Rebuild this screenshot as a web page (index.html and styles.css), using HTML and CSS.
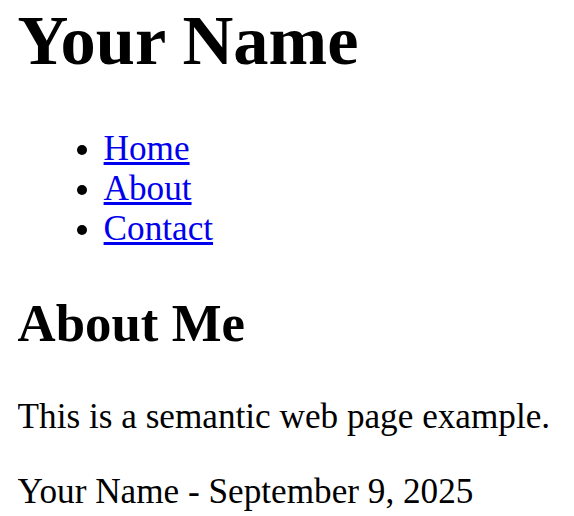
FILE: index.html
```html
<!DOCTYPE html>
<html lang="en">
<head>
<meta charset="utf-8">
<title>Your Name</title>
<link rel="stylesheet" href="styles.css">
</head>
<body class="page">
<header class="site-header">
  <h1 class="site-title">Your Name</h1>
  <nav class="site-nav">
    <ul class="nav-list">
      <li class="nav-item"><a class="nav-link" href="#home">Home</a></li>
      <li class="nav-item"><a class="nav-link" href="#about">About</a></li>
      <li class="nav-item"><a class="nav-link" href="#contact">Contact</a></li>
    </ul>
  </nav>
</header>
<main class="content">
  <section class="about">
    <h2 class="section-title">About Me</h2>
    <p class="text">This is a semantic web page example.</p>
  </section>
</main>
<footer class="site-footer">
  <p class="footer-text">Your Name - September 9, 2025</p>
</footer>
</body>
</html>
```

FILE: styles.css
```css
html {
  background: #ffffff;
}

.page {
  margin: 0 17.6px;
  font-family: "Liberation Serif", "Times New Roman", serif;
  font-size: 35.2px;
  color: #000000;
}

.site-title {
  font-size: 70.4px;
  font-weight: bold;
  margin: 0 0 48px 0;
}

.nav-list {
  margin: 0;
  padding-left: 86px;
  list-style: disc;
}

.nav-link {
  color: #0000ee;
  text-decoration: underline;
}

.section-title {
  font-size: 52.8px;
  font-weight: bold;
  margin: 44px 0 44px 0;
}

.text {
  margin: 0 0 35px 0;
}

.footer-text {
  margin: 0;
}
```
